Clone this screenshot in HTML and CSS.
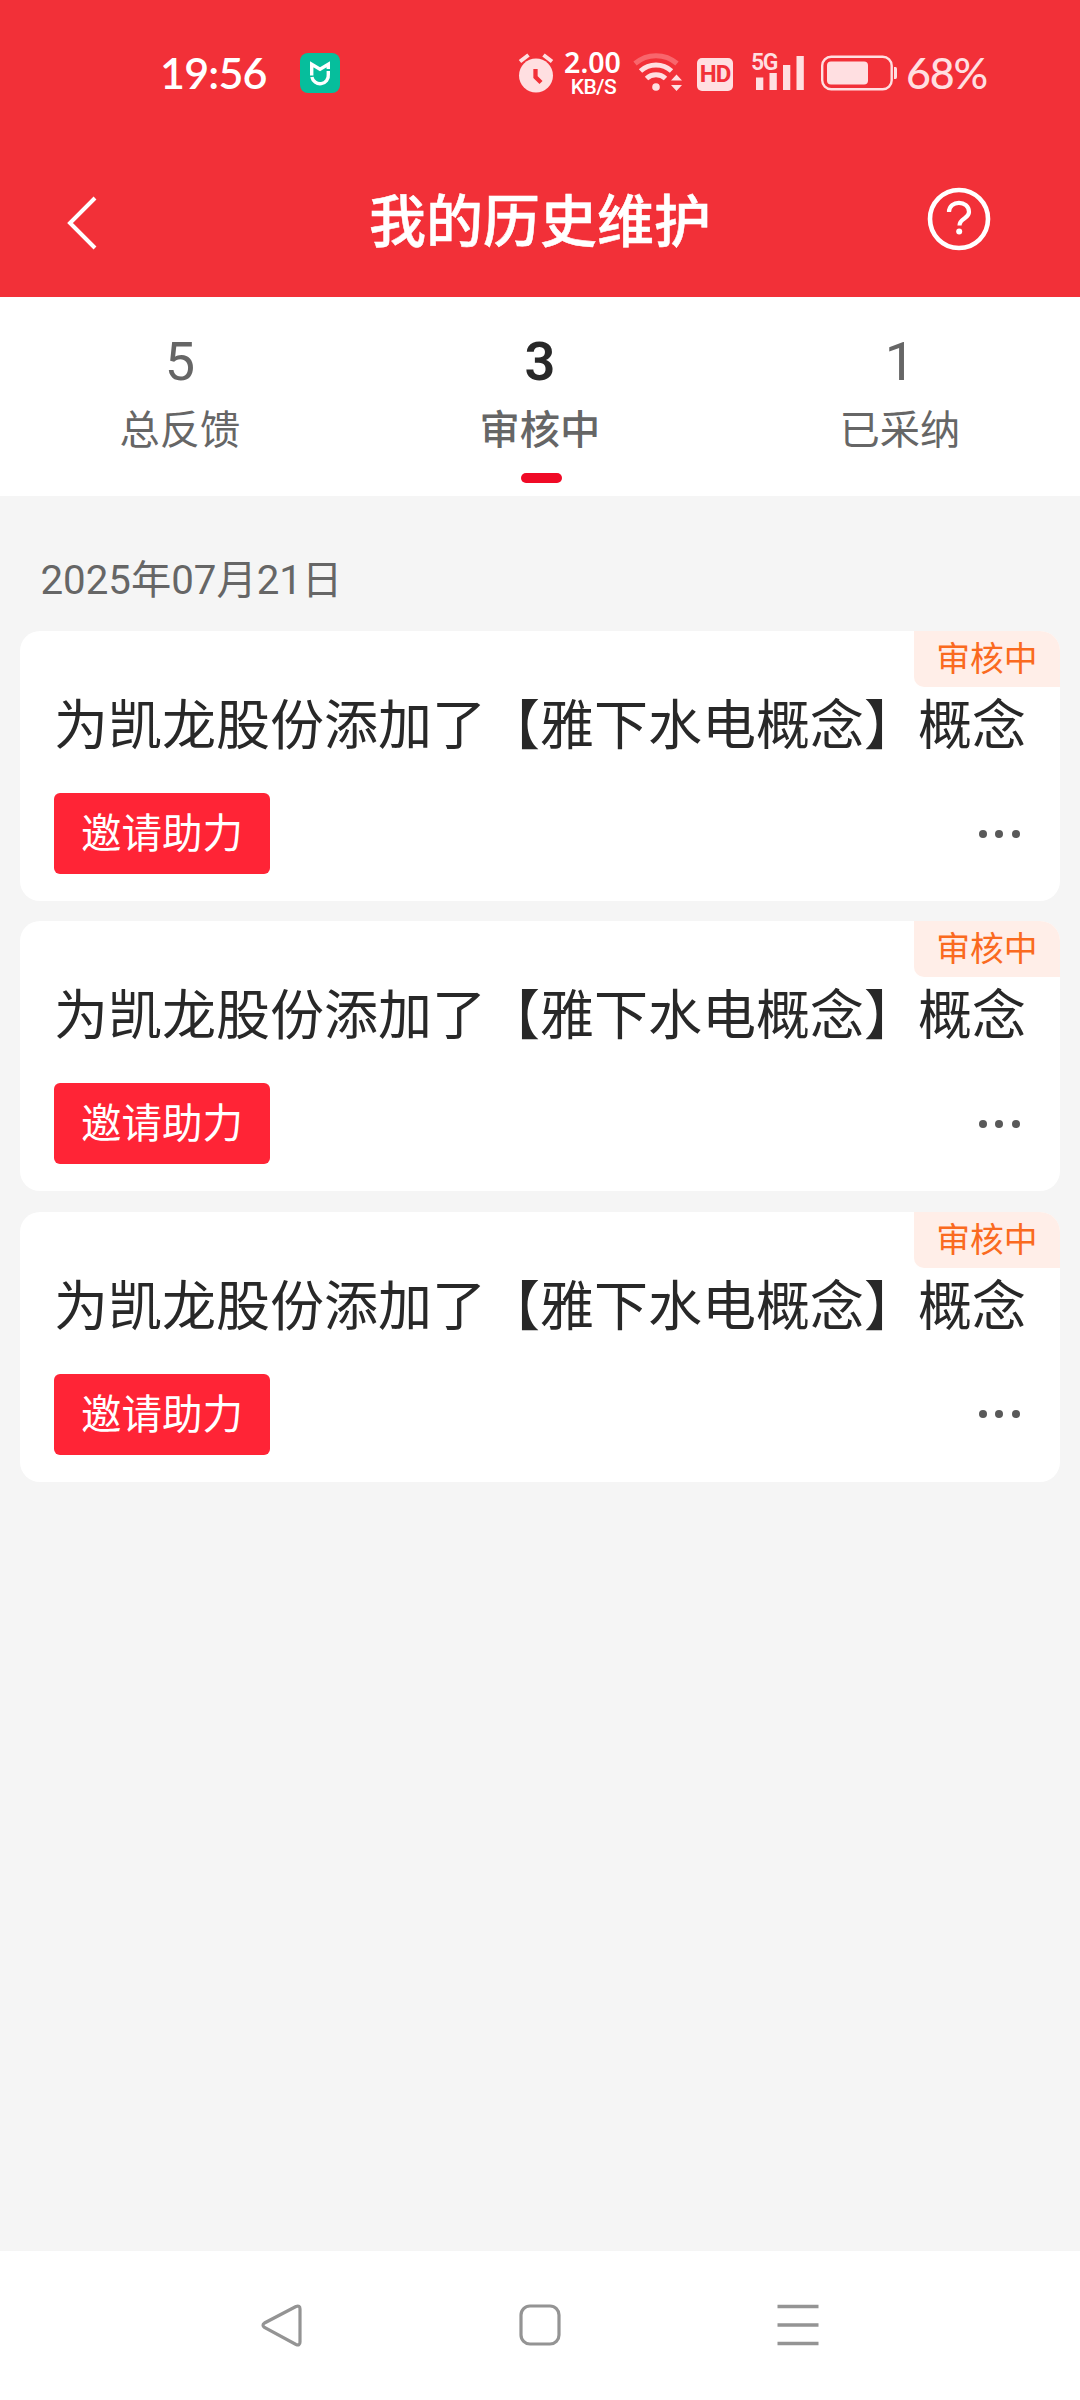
FILE: index.html
```
<!DOCTYPE html>
<html lang="zh-CN">
<head>
<meta charset="utf-8">
<title>我的历史维护</title>
<link rel="stylesheet" href="styles.css">
</head>
<body>
<div class="screen">
  <header class="header">
    <div class="status">
      <span class="time">19:56</span>
      <svg class="app" width="40" height="40" viewBox="0 0 40 40"><rect width="40" height="40" rx="8" fill="#06be9c"/><g fill="none" stroke="#fff" stroke-width="3.4"><path d="M11.7 22.5V11.3L20 16.2L28.3 11.3V16"/><path d="M28.300 18V21.500A8.300 8.300 0 0 1 11.900 24"/></g></svg>
      <svg class="alarm" width="36" height="60" viewBox="0 0 36 60"><circle cx="18" cy="32.500" r="17" fill="#ffdfe1"/><path d="M2 18.500L10.500 12M34 18.500L25.500 12" stroke="#ffdfe1" stroke-width="4" fill="none"/><path d="M17.500 26V34L23 39.500" stroke="#f23038" stroke-width="4.300" fill="none"/></svg>
      <div class="speed"><span class="rate">2.00</span><span class="unit">KB/S</span></div>
      <svg class="wifi" width="50" height="60" viewBox="0 0 50 60"><g fill="none" stroke-width="5"><path d="M2 20.500A32 32 0 0 1 44 20.500" stroke="#f8666c"/><path d="M7.500 28A23 23 0 0 1 38.500 28" stroke="#ffdfe1"/><path d="M13.500 35.500A14 14 0 0 1 32.500 35.500" stroke="#ffdfe1"/></g><circle cx="23" cy="44" r="3.800" fill="#ffdfe1"/><path d="M38 37.500L43.500 31.500L49 37.500ZM38 42L43.500 48L49 42Z" fill="#ffdfe1"/></svg>
      <span class="hd">HD</span>
      <div class="signal"><span class="net">5G</span><svg width="48" height="35" viewBox="0 0 48 35"><path d="M0 22.500h7.300v12.500H0zM13.500 18h7.300v17h-7.300zM27 10h7.300v25H27zM40.500 1h7.300v34h-7.300z" fill="#ffdfe1"/></svg></div>
      <svg class="battery" width="76" height="36" viewBox="0 0 76 36"><rect x="1.200" y="1.700" width="69.500" height="32.600" rx="9" fill="none" stroke="#ffdfe1" stroke-width="2.400"/><rect x="6" y="6.500" width="41" height="23" rx="4" fill="#ffdfe1"/><path d="M73 12h1.500q1.500 0 1.500 2v8q0 2-1.500 2H73z" fill="#ffdfe1"/></svg>
      <span class="percent">68%</span>
    </div>
    <div class="titlebar">
      <svg class="back" width="34" height="56" viewBox="0 0 34 56"><path d="M30 3L5 28L30 53" fill="none" stroke="#fff" stroke-width="4"/></svg>
      <h1 class="title">我的历史维护</h1>
      <svg class="help" width="64" height="64" viewBox="0 0 64 64"><circle cx="32" cy="32" r="29" fill="none" stroke="#fff" stroke-width="4.600"/><path d="M22 25C22 12.500 42 13 42 25C42 32 32.500 31 32.500 38.500" fill="none" stroke="#fff" stroke-width="4.200"/><circle cx="32.200" cy="44.500" r="3" fill="#fff"/></svg>
    </div>
  </header>
  <nav class="tabs">
    <div class="tab"><span class="num">5</span><span class="label">总反馈</span></div>
    <div class="tab active"><span class="num">3</span><span class="label">审核中</span><i class="bar"></i></div>
    <div class="tab"><span class="num">1</span><span class="label">已采纳</span></div>
  </nav>
  <main class="content">
    <div class="date">2025年07月21日</div>
    <section class="list">
      <article class="card"><span class="badge">审核中</span><h2 class="text">为凯龙股份添加了【雅下水电概念】概念</h2><div class="actions"><button class="invite">邀请助力</button><span class="more"><i></i><i></i><i></i></span></div></article>
      <article class="card"><span class="badge">审核中</span><h2 class="text">为凯龙股份添加了【雅下水电概念】概念</h2><div class="actions"><button class="invite">邀请助力</button><span class="more"><i></i><i></i><i></i></span></div></article>
      <article class="card"><span class="badge">审核中</span><h2 class="text">为凯龙股份添加了【雅下水电概念】概念</h2><div class="actions"><button class="invite">邀请助力</button><span class="more"><i></i><i></i><i></i></span></div></article>
    </section>
  </main>
  <footer class="sysnav">
    <svg width="44" height="44" viewBox="0 0 44 44"><path d="M36 3.500L4.500 20Q1.500 22 4.500 24.500L36 41.500Q40 43 40 39V6Q40 2 36 3.500Z" fill="none" stroke="#949494" stroke-width="3.200"/></svg>
    <svg width="44" height="44" viewBox="0 0 44 44"><rect x="3" y="3" width="38" height="38" rx="9" fill="none" stroke="#949494" stroke-width="3.200"/></svg>
    <svg width="44" height="44" viewBox="0 0 44 44"><path d="M1.500 3.500h41M1.500 22h41M1.500 40.500h41" stroke="#949494" stroke-width="3.600"/></svg>
  </footer>
</div>
</body>
</html>
```
FILE: styles.css
```
* { box-sizing: border-box; margin: 0; padding: 0; }
body { font-family: Roboto, "Noto Sans CJK SC", sans-serif; background: #f5f5f5; }
svg { display: block; flex: none; }
.screen { width: 1080px; height: 2400px; display: flex; flex-direction: column; background: #f5f5f5; }

.header { height: 297px; background: #f23038; color: #fff; }
.status { height: 146px; display: flex; align-items: center; padding-left: 160px; white-space: nowrap; font-family: Lato, sans-serif; }
.time { width: 140px; font-size: 43px; font-weight: 600; line-height: 60px; letter-spacing: -0.8px; }
.alarm { margin-left: 178px; }
.speed { width: 57px; margin-left: 10px; display: flex; flex-direction: column; align-items: center; font-weight: 600; }
.rate { font: 600 28.5px/25px "Noto Sans", sans-serif; }
.unit { font: 500 21px/18px Roboto, sans-serif; letter-spacing: -0.5px; margin-top: 3px; padding-left: 2px; }
.wifi { margin-left: 12px; }
.hd { width: 36px; height: 33px; margin: 3px 0 0 14px; border-radius: 5px; background: #ffdfe1; color: #f23038; font: 700 24px/33px Roboto, sans-serif; text-align: center; letter-spacing: -1px; }
.signal { width: 52px; height: 60px; margin-left: 19px; position: relative; padding: 12px 0 0 4px; }
.net { position: absolute; left: -1px; top: 8px; font: 600 23px/23px Roboto, sans-serif; letter-spacing: -1.5px; color: #ffdfe1; }
.battery { margin-left: 17px; }
.percent { margin: -2px 0 0 9px; font-size: 43px; font-weight: 500; letter-spacing: -1.2px; color: #ffdfe1; }

.titlebar { height: 151px; display: grid; grid-template-columns: 89px 1fr 89px; align-items: center; padding: 0 65px 5px; }
.back { margin-top: 7px; }
.help { margin-left: 1px; }
.title { font-size: 57px; font-weight: 500; line-height: 80px; text-align: center; padding-top: 7px; -webkit-text-stroke: 0.5px #fff; }
.tabs { height: 199px; background: #fff; display: grid; grid-template-columns: repeat(3, 1fr); color: #666; }
.tab { display: flex; flex-direction: column; align-items: center; padding-top: 33px; }
.num { font-size: 54px; line-height: 64px; }
.label { font-size: 40.25px; line-height: 60px; margin-top: 7px; }
.active .label { font-weight: 500; }
.active .num { color: #282828; font-weight: 600; }
.bar { width: 41px; height: 10px; border-radius: 5px; margin: 12px 0 0 3px; background: #f00a26; }

.content { flex: 1; padding: 55px 20px 0; }
.date { padding-left: 20.5px; font-size: 40.25px; line-height: 60px; height: 80px; color: #666; }
.list { display: flex; flex-direction: column; gap: 20.35px; }
.card { height: 270px; border-radius: 20px; background: #fff; position: relative; overflow: hidden; padding: 56px 34px 0; }
.badge { position: absolute; top: 0; right: 0; width: 146px; height: 56px; border-radius: 0 0 0 10px; background: #ffeee8; color: #fa6a20; font-size: 33.750px; line-height: 57px; text-align: center; }
.text { font-size: 54px; font-weight: 400; line-height: 80px; color: #282828; white-space: nowrap; }
.actions { display: flex; justify-content: space-between; align-items: center; margin-top: 26px; }
.invite { width: 216px; height: 81px; border: 0; border-radius: 6px; background: #ff2436; color: #fff; font-family: inherit; font-size: 40.5px; line-height: 81px; padding-top: 1px; }
.more { display: flex; gap: 8.400px; padding-right: 6.5px; }
.more i { width: 8px; height: 8px; border-radius: 50%; background: #595959; }

.sysnav { height: 149px; background: #fff; display: flex; justify-content: space-between; align-items: center; padding: 0 260px 2px; }
```
